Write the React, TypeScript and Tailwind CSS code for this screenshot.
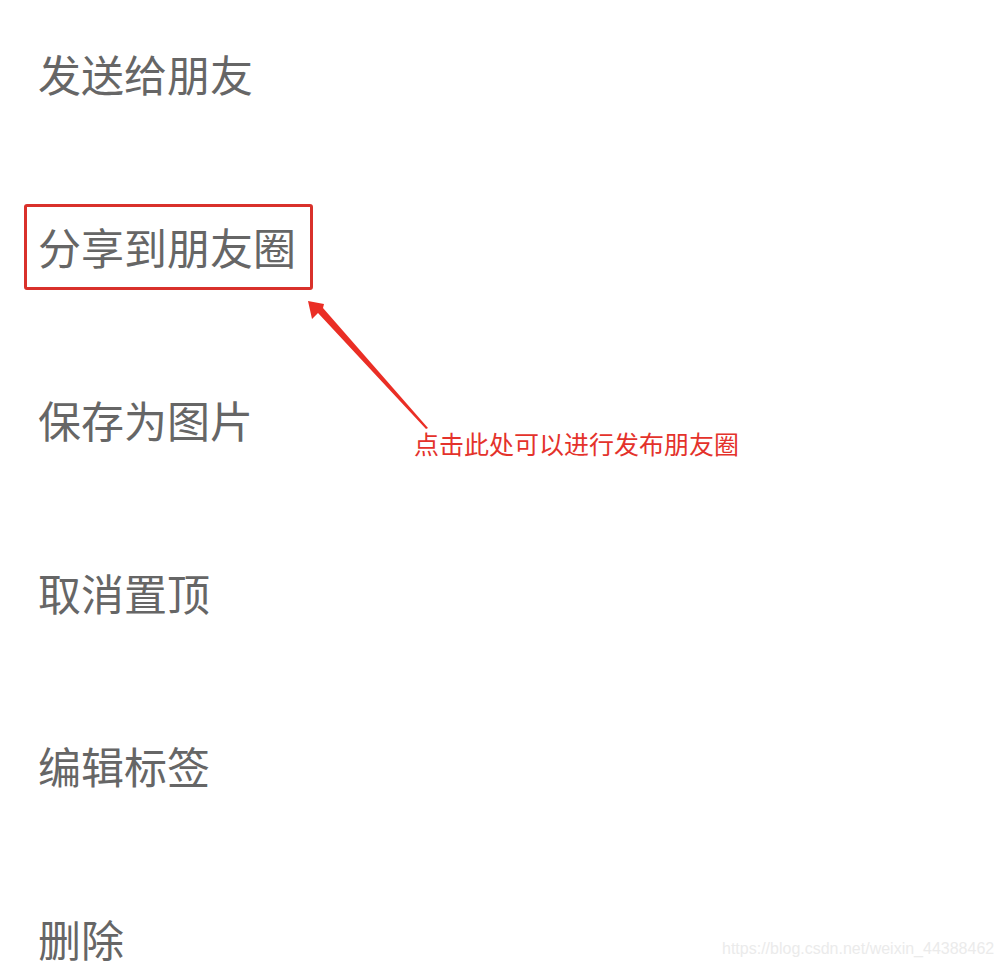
import React from "react";

const items = ["发送给朋友", "分享到朋友圈", "保存为图片", "取消置顶", "编辑标签", "删除"];

export default function App() {
  return (
    <div
      className="relative w-[1003px] h-[970px] overflow-hidden bg-white"
      style={{ fontFamily: '"Noto Sans CJK SC", "Noto Sans", sans-serif' }}
    >
      <div className="flex flex-col gap-[123px] pt-[48px] pl-[38px]">
        {items.map((t, i) => (
          <div key={t} className="relative h-[50px] text-[43px] leading-[50px] text-[#666666] whitespace-nowrap">
            {i === 1 && (
              <div className="absolute left-[-14px] top-[-17px] w-[289px] h-[86px] border-[3px] border-[#d9312b] rounded-[3px]" />
            )}
            <span className="relative">{t}</span>
          </div>
        ))}
      </div>

      <svg className="absolute left-0 top-0" width="1003" height="970">
        <polygon points="308,301 312,319 318,313 426,429 428,428 323,308 324,304" fill="#ea2e25" />
      </svg>

      <div className="absolute left-[414px] top-[428px] text-[25px] leading-[30px] text-[#e4322b] whitespace-nowrap">
        点击此处可以进行发布朋友圈
      </div>

      <div
        className="absolute left-[722px] top-[939px] text-[16px] leading-[20px] text-[#ebebeb] whitespace-nowrap"
        style={{ fontFamily: '"Liberation Sans", Arial, sans-serif' }}
      >
        https://blog.csdn.net/weixin_44388462
      </div>
    </div>
  );
}
